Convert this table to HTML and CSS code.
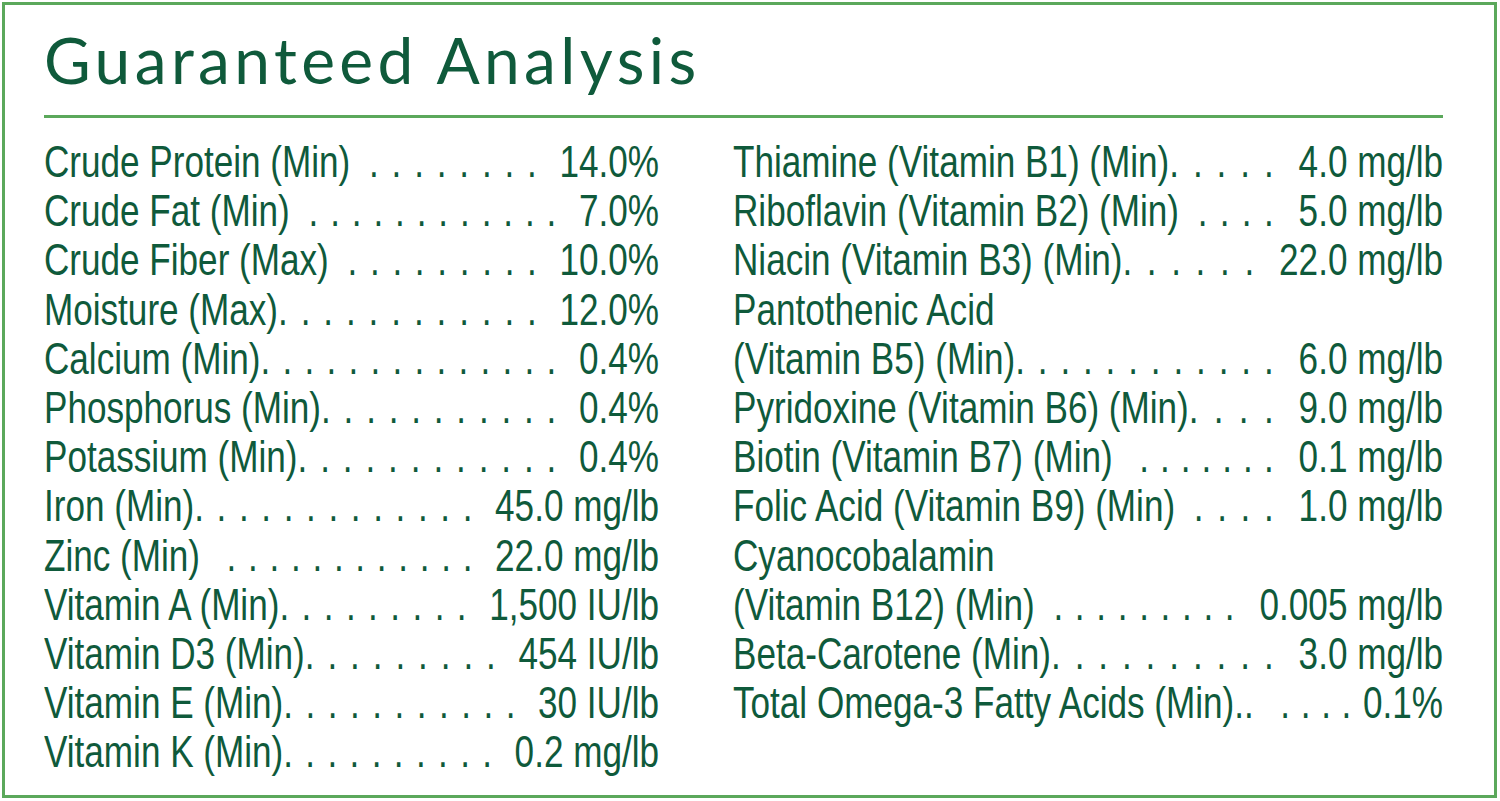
FILE: index.html
```html
<!DOCTYPE html>
<html lang="en">
<head>
<meta charset="utf-8">
<title>Guaranteed Analysis</title>
<link rel="stylesheet" href="styles.css">
</head>
<body>
<div class="frame">
  <h1 class="title">Guaranteed Analysis</h1>
  <div class="rule"></div>
  <div class="cols">
    <div class="col col-left">
      <div class="row"><span class="label">Crude Protein (Min)</span><span class="leader sp">. . . . . . . .</span><span class="value">14.0%</span></div>
      <div class="row"><span class="label">Crude Fat (Min)</span><span class="leader sp">. . . . . . . . . . . .</span><span class="value">7.0%</span></div>
      <div class="row"><span class="label">Crude Fiber (Max)</span><span class="leader sp">. . . . . . . . .</span><span class="value">10.0%</span></div>
      <div class="row"><span class="label">Moisture (Max)</span><span class="leader">. . . . . . . . . . . .</span><span class="value">12.0%</span></div>
      <div class="row"><span class="label">Calcium (Min)</span><span class="leader">. . . . . . . . . . . . . .</span><span class="value">0.4%</span></div>
      <div class="row"><span class="label">Phosphorus (Min)</span><span class="leader">. . . . . . . . . . .</span><span class="value">0.4%</span></div>
      <div class="row"><span class="label">Potassium (Min)</span><span class="leader">. . . . . . . . . . . .</span><span class="value">0.4%</span></div>
      <div class="row"><span class="label">Iron (Min)</span><span class="leader">. . . . . . . . . . . . .</span><span class="value">45.0 mg/lb</span></div>
      <div class="row"><span class="label">Zinc (Min)</span><span class="leader sp2">. . . . . . . . . . . .</span><span class="value">22.0 mg/lb</span></div>
      <div class="row"><span class="label">Vitamin A (Min)</span><span class="leader">. . . . . . . . .</span><span class="value">1,500 IU/lb</span></div>
      <div class="row"><span class="label">Vitamin D3 (Min)</span><span class="leader">. . . . . . . . .</span><span class="value">454 IU/lb</span></div>
      <div class="row"><span class="label">Vitamin E (Min)</span><span class="leader">. . . . . . . . . . .</span><span class="value">30 IU/lb</span></div>
      <div class="row"><span class="label">Vitamin K (Min)</span><span class="leader">. . . . . . . . . .</span><span class="value">0.2 mg/lb</span></div>
    </div>
    <div class="col col-right">
      <div class="row"><span class="label">Thiamine (Vitamin B1) (Min)</span><span class="leader">. . . . .</span><span class="value">4.0 mg/lb</span></div>
      <div class="row"><span class="label">Riboflavin (Vitamin B2) (Min)</span><span class="leader sp">. . . .</span><span class="value">5.0 mg/lb</span></div>
      <div class="row"><span class="label">Niacin (Vitamin B3) (Min)</span><span class="leader">. . . . . .</span><span class="value">22.0 mg/lb</span></div>
      <div class="row"><span class="label">Pantothenic Acid</span></div>
      <div class="row"><span class="label">(Vitamin B5) (Min)</span><span class="leader">. . . . . . . . . . . .</span><span class="value">6.0 mg/lb</span></div>
      <div class="row"><span class="label">Pyridoxine (Vitamin B6) (Min)</span><span class="leader">. . . .</span><span class="value">9.0 mg/lb</span></div>
      <div class="row"><span class="label">Biotin (Vitamin B7) (Min)</span><span class="leader sp2">. . . . . . .</span><span class="value">0.1 mg/lb</span></div>
      <div class="row"><span class="label">Folic Acid (Vitamin B9) (Min)</span><span class="leader sp">. . . .</span><span class="value">1.0 mg/lb</span></div>
      <div class="row"><span class="label">Cyanocobalamin</span></div>
      <div class="row"><span class="label">(Vitamin B12) (Min)</span><span class="leader sp">. . . . . . . . .</span><span class="value">0.005 mg/lb</span></div>
      <div class="row"><span class="label">Beta-Carotene (Min)</span><span class="leader">. . . . . . . . . .</span><span class="value">3.0 mg/lb</span></div>
      <div class="row"><span class="label">Total Omega-3 Fatty Acids (Min)..</span><span class="leader sp2">. . . .</span><span class="value value-tight">0.1%</span></div>
    </div>
  </div>
</div>
</body>
</html>
```

FILE: styles.css
```css
html, body {
  margin: 0;
  padding: 0;
  background: #ffffff;
}

.frame {
  box-sizing: border-box;
  margin: 2px 0 0 2px;
  width: 1495px;
  height: 796px;
  border: 3px solid #5ba85b;
  padding: 17px 51px 0 39px;
  color: #0f5a3b;
  overflow: hidden;
}

.title {
  margin: 0;
  font-family: Lato, "Open Sans", sans-serif;
  font-weight: 400;
  font-size: 64px;
  line-height: 76px;
  letter-spacing: 4.4px;
  white-space: nowrap;
}

.rule {
  margin-top: 17px;
  border-top: 3px solid #5ba85b;
}

.cols {
  display: grid;
  grid-template-columns: 615px 710px;
  column-gap: 74px;
  margin-top: 19px;
}

/* condensed face: regular sans squeezed horizontally */
.col {
  width: calc(100% / 0.78);
  transform: scaleX(0.78);
  transform-origin: left top;
}

.row {
  display: flex;
  align-items: baseline;
  font-family: "Liberation Sans", Arial, sans-serif;
  font-size: 45px;
  line-height: 49.2px;
  white-space: nowrap;
}

.label {
  flex: 0 0 auto;
}

/* dot leader: spread evenly between the label and the value */
.leader {
  flex: 1 1 0;
  min-width: 0;
  white-space: normal;
  word-spacing: -6px;
  text-align: justify;
  text-align-last: justify;
}

.leader.sp {
  margin-left: 24px;
}

.leader.sp2 {
  margin-left: 34px;
}

.value {
  flex: 0 0 auto;
}

.col-left .value {
  padding-left: 29px;
}

.col-right .value {
  padding-left: 32px;
}

.col-right .value-tight {
  padding-left: 15px;
}
```
